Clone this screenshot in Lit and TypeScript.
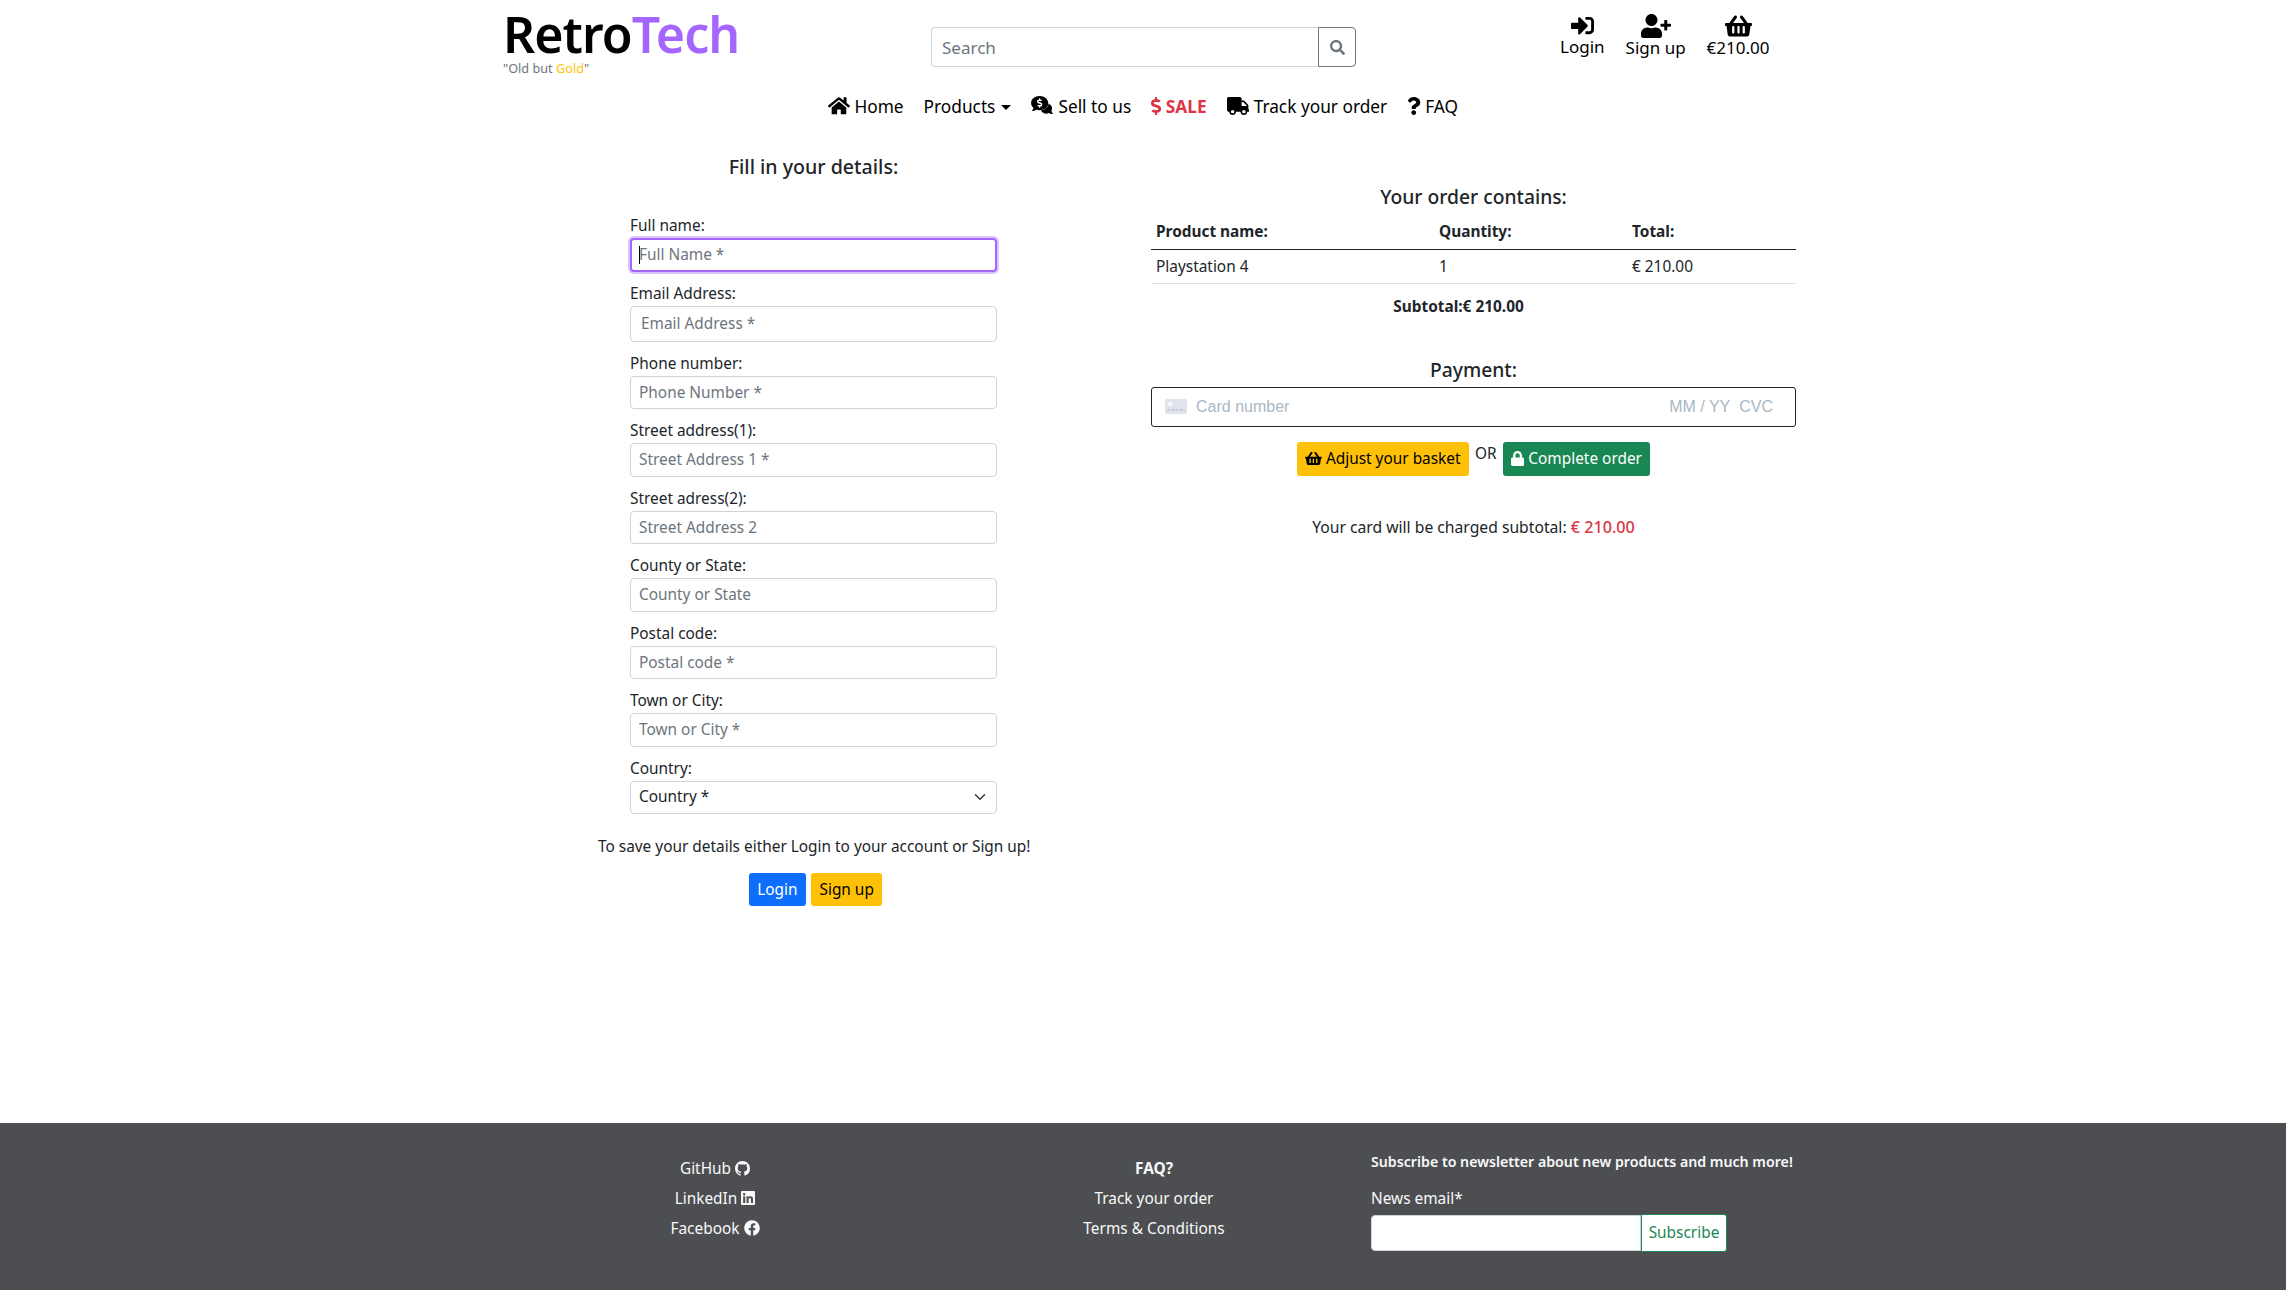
import { LitElement, css, html, svg } from "lit";
import { customElement } from "lit/decorators.js";

// font-awesome style glyphs, [viewBox width, path]
const ICONS: Record<string, [number, string]> = {
  home: [576, "M280.37 148.26L96 300.11V464a16 16 0 0 0 16 16l112.06-.29a16 16 0 0 0 15.92-16V368a16 16 0 0 1 16-16h64a16 16 0 0 1 16 16v95.64a16 16 0 0 0 16 16.05L464 480a16 16 0 0 0 16-16V300L295.67 148.26a12.19 12.19 0 0 0-15.3 0zM571.6 251.47L488 182.56V44.05a12 12 0 0 0-12-12h-56a12 12 0 0 0-12 12v72.61L318.47 43a48 48 0 0 0-61 0L4.34 251.47a12 12 0 0 0-1.6 16.9l25.5 31A12 12 0 0 0 45.15 301l235.22-193.74a12.19 12.19 0 0 1 15.3 0L530.9 301a12 12 0 0 0 16.9-1.6l25.5-31a12 12 0 0 0-1.7-16.93z"],
  login: [512, "M416 448h-84c-6.6 0-12-5.4-12-12v-40c0-6.6 5.4-12 12-12h84c17.7 0 32-14.3 32-32V160c0-17.7-14.3-32-32-32h-84c-6.6 0-12-5.4-12-12V76c0-6.6 5.4-12 12-12h84c53 0 96 43 96 96v192c0 53-43 96-96 96zm-47-201L201 79c-15-15-41-4.5-41 17v96H24c-13.3 0-24 10.7-24 24v96c0 13.3 10.7 24 24 24h136v96c0 21.5 26 32 41 17l168-168c9.3-9.4 9.3-24.6 0-34z"],
  userPlus: [640, "M624 208h-64v-64c0-8.8-7.2-16-16-16h-32c-8.8 0-16 7.2-16 16v64h-64c-8.8 0-16 7.2-16 16v32c0 8.8 7.2 16 16 16h64v64c0 8.8 7.2 16 16 16h32c8.8 0 16-7.2 16-16v-64h64c8.8 0 16-7.2 16-16v-32c0-8.8-7.2-16-16-16zm-400 48c70.7 0 128-57.3 128-128S294.7 0 224 0 96 57.3 96 128s57.3 128 128 128zm89.6 32h-16.7c-22.2 10.2-46.9 16-72.9 16s-50.6-5.8-72.9-16h-16.7C60.2 288 0 348.2 0 422.4V464c0 26.5 21.5 48 48 48h352c26.5 0 48-21.5 48-48v-41.6c0-74.2-60.2-134.4-134.4-134.4z"],
  basket: [576, "M576 216v16c0 13.255-10.745 24-24 24h-8l-26.113 182.788C514.509 462.435 494.257 480 470.37 480H105.63c-23.887 0-44.139-17.565-47.518-41.212L32 256h-8c-13.255 0-24-10.745-24-24v-16c0-13.255 10.745-24 24-24h67.341l106.78-146.821c10.395-14.292 30.407-17.453 44.701-7.058 14.293 10.395 17.453 30.408 7.058 44.701L170.477 192h235.046L326.12 82.821c-10.395-14.292-7.234-34.306 7.059-44.701 14.291-10.395 34.306-7.235 44.701 7.058L484.659 192H552c13.255 0 24 10.745 24 24zM312 392V280c0-13.255-10.745-24-24-24s-24 10.745-24 24v112c0 13.255 10.745 24 24 24s24-10.745 24-24zm112 0V280c0-13.255-10.745-24-24-24s-24 10.745-24 24v112c0 13.255 10.745 24 24 24s24-10.745 24-24zm-224 0V280c0-13.255-10.745-24-24-24s-24 10.745-24 24v112c0 13.255 10.745 24 24 24s24-10.745 24-24z"],
  search: [512, "M505 442.7L405.3 343c-4.5-4.5-10.6-7-17-7H372c27.6-35.3 44-79.7 44-128C416 93.1 322.9 0 208 0S0 93.1 0 208s93.1 208 208 208c48.3 0 92.7-16.4 128-44v16.3c0 6.4 2.5 12.5 7 17l99.7 99.7c9.4 9.4 24.6 9.4 33.9 0l28.3-28.3c9.4-9.4 9.4-24.6.1-34zM208 336c-70.7 0-128-57.2-128-128 0-70.7 57.2-128 128-128 70.7 0 128 57.2 128 128 0 70.7-57.2 128-128 128z"],
  truck: [640, "M624 352h-16V243.9c0-12.7-5.1-24.9-14.1-33.9L494 110.1c-9-9-21.2-14.1-33.9-14.1H416V48c0-26.5-21.5-48-48-48H48C21.5 0 0 21.5 0 48v320c0 26.5 21.5 48 48 48h16c0 53 43 96 96 96s96-43 96-96h128c0 53 43 96 96 96s96-43 96-96h48c8.8 0 16-7.2 16-16v-32c0-8.8-7.2-16-16-16zM160 464c-26.5 0-48-21.5-48-48s21.5-48 48-48 48 21.5 48 48-21.5 48-48 48zm320 0c-26.5 0-48-21.5-48-48s21.5-48 48-48 48 21.5 48 48-21.5 48-48 48zm80-208H416V144h44.1l99.9 99.9V256z"],
  question: [384, "M202.021 0C122.202 0 70.503 32.703 29.914 91.026c-7.363 10.58-5.093 25.086 5.178 32.874l43.138 32.709c10.373 7.865 25.132 6.026 33.253-4.148 25.049-31.381 43.63-49.449 82.757-49.449 30.764 0 68.816 19.799 68.816 49.631 0 22.552-18.617 34.134-48.993 51.164-35.423 19.86-82.299 44.576-82.299 106.405V320c0 13.255 10.745 24 24 24h72.471c13.255 0 24-10.745 24-24v-5.773c0-42.86 125.268-44.645 125.268-160.627C377.504 66.256 286.902 0 202.021 0zM192 373.459c-38.196 0-69.271 31.075-69.271 69.271 0 38.195 31.075 69.27 69.271 69.27s69.271-31.075 69.271-69.271-31.075-69.27-69.271-69.27z"],
  dollar: [288, "M209.2 233.4l-108-31.6C88.7 198.2 80 186.5 80 173.5c0-16.3 13.2-29.5 29.5-29.5h66.3c12.2 0 24.2 3.7 34.2 10.5 6.1 4.1 14.3 3.1 19.5-2l34.8-34c7.1-6.9 6.1-18.4-1.8-24.5C238 74.8 207.4 64.1 176 64V16c0-8.8-7.2-16-16-16h-32c-8.8 0-16 7.2-16 16v48h-2.5C45.8 64-5.4 118.7.5 183.6c4.2 46.1 39.4 83.6 83.8 96.6l102.5 30c12.5 3.7 21.2 15.3 21.2 28.3 0 16.3-13.2 29.5-29.5 29.5h-66.3C100 368 88 364.3 78 357.5c-6.1-4.1-14.3-3.1-19.5 2l-34.8 34c-7.1 6.9-6.1 18.4 1.8 24.5 24.5 19.2 55.1 29.9 86.5 30v48c0 8.8 7.2 16 16 16h32c8.8 0 16-7.2 16-16v-48.2c46.6-.9 90.3-28.6 105.7-72.7 21.5-61.6-14.6-124.8-72.5-141.7z"],
  lock: [448, "M400 224h-24v-72C376 68.2 307.8 0 224 0S72 68.2 72 152v72H48c-26.5 0-48 21.5-48 48v192c0 26.5 21.5 48 48 48h352c26.5 0 48-21.5 48-48V272c0-26.5-21.5-48-48-48zm-104 0H152v-72c0-39.7 32.3-72 72-72s72 32.3 72 72v72z"],
  linkedin: [448, "M416 32H31.9C14.3 32 0 46.5 0 64.3v383.4C0 465.5 14.3 480 31.9 480H416c17.6 0 32-14.5 32-32.3V64.3c0-17.8-14.4-32.3-32-32.3zM135.4 416H69V202.2h66.5V416zm-33.2-243c-21.3 0-38.5-17.3-38.5-38.5S80.9 96 102.2 96c21.2 0 38.5 17.3 38.5 38.5 0 21.3-17.2 38.5-38.5 38.5zm282.1 243h-66.4V312c0-24.8-.5-56.7-34.5-56.7-34.6 0-39.9 27-39.9 54.9V416h-66.4V202.2h63.7v29.2h.9c8.9-16.8 30.6-34.5 62.9-34.5 67.2 0 79.7 44.3 79.7 101.9V416z"],
  facebook: [512, "M504 256C504 119 393 8 256 8S8 119 8 256c0 123.78 90.69 226.38 209.25 245V327.69h-63V256h63v-54.64c0-62.15 37-96.48 93.67-96.48 27.14 0 55.52 4.84 55.52 4.84v61h-31.28c-30.8 0-40.41 19.12-40.41 38.73V256h68.78l-11 71.69h-57.78V501C413.31 482.38 504 379.78 504 256z"],
};

const GITHUB = "M8 0C3.58 0 0 3.58 0 8c0 3.54 2.29 6.53 5.47 7.59.4.07.55-.17.55-.38 0-.19-.01-.82-.01-1.49-2.01.37-2.53-.49-2.69-.94-.09-.23-.48-.94-.82-1.13-.28-.15-.68-.52-.01-.53.63-.01 1.08.58 1.23.82.72 1.21 1.87.87 2.33.66.07-.52.28-.87.51-1.07-1.78-.2-3.64-.89-3.64-3.95 0-.87.31-1.59.82-2.15-.08-.2-.36-1.02.08-2.12 0 0 .67-.21 2.2.82.64-.18 1.32-.27 2-.27.68 0 1.36.09 2 .27 1.53-1.04 2.2-.82 2.2-.82.44 1.1.16 1.92.08 2.12.51.56.82 1.27.82 2.15 0 3.07-1.87 3.75-3.65 3.95.29.25.54.73.54 1.48 0 1.07-.01 1.93-.01 2.2 0 .21.15.46.55.38A8.013 8.013 0 0016 8c0-4.42-3.58-8-8-8z";

const icon = (name: string, size = 16) => {
  const [w, d] = ICONS[name];
  return html`<svg class="ico" viewBox="0 0 ${w} 512" width=${(size * w) / 512} height=${size} fill="currentColor">${svg`<path d=${d}></path>`}</svg>`;
};

// big bubble with a dollar, small bubble tucked behind its lower right
const sellIcon = html`<svg class="ico" viewBox="0 0 24 20" width="23" height="19" fill="currentColor">
  <path d="M14 8.500a5 5 0 0 1 5.500 .200c2.600 1.600 3.300 4.600 1.900 7l1.600 3.300c-1.700 .2-3.200-.2-4.400-1-3 1.300-6.100 .3-7.700-2-.3-.4-.5-.8-.6-1.200z"></path>
  <path d="M9 0c5.100 0 9 3.100 9 7.400s-3.900 7.500-9 7.500c-1.200 0-2.400-.2-3.500-.5-1.300 1-2.900 1.500-4.700 1.500 .9-1 1.500-2.100 1.700-3.200C.9 11.100 0 9.400 0 7.400 0 3.100 3.900 0 9 0z" stroke="#fff" stroke-width=".7" paint-order="stroke"></path>
  <path fill="#fff" transform="translate(6.200 2.400) scale(.0195 .0195)" d=${ICONS.dollar[1]}></path>
</svg>`;

const FIELDS = [
  { label: "Full name:", ph: "Full Name *", cls: "focused" },
  { label: "Email Address:", ph: "Email Address *", cls: "tall" },
  { label: "Phone number:", ph: "Phone Number *", cls: "" },
  { label: "Street address(1):", ph: "Street Address 1 *", cls: "" },
  { label: "Street adress(2):", ph: "Street Address 2", cls: "" },
  { label: "County or State:", ph: "County or State", cls: "" },
  { label: "Postal code:", ph: "Postal code *", cls: "" },
  { label: "Town or City:", ph: "Town or City *", cls: "" },
];

@customElement("app-root")
export class AppRoot extends LitElement {
  override render() {
    return html`
      <header class="top">
        <div class="brand">
          <div class="logo">Retro<span class="purple">Tech</span></div>
          <div class="tagline">"Old but <span class="gold">Gold</span>"</div>
        </div>
        <div class="search">
          <input class="search-input" placeholder="Search" />
          <button class="search-btn">${icon("search", 15)}</button>
        </div>
        <div class="account">
          <a class="acc">${icon("login", 23)}<span>Login</span></a>
          <a class="acc">${icon("userPlus", 24)}<span>Sign up</span></a>
          <a class="acc">${icon("basket", 24)}<span>€210.00</span></a>
        </div>
      </header>

      <nav class="nav">
        <a>${icon("home", 19.5)} Home</a>
        <a>Products <i class="caret"></i></a>
        <a>${sellIcon} Sell to us</a>
        <a class="sale">${icon("dollar", 18)} SALE</a>
        <a>${icon("truck", 18)} Track your order</a>
        <a>${icon("question", 18)} FAQ</a>
      </nav>

      <main class="main">
        <section class="details">
          <h2 class="title">Fill in your details:</h2>
          <form class="form">
            ${FIELDS.map(
              (f) => html`
                <label class="field">
                  <span class="lbl">${f.label}</span>
                  <span class="control-wrap">
                    <input class="control ${f.cls}" placeholder=${f.ph} />
                    ${f.cls === "focused" ? html`<i class="cursor"></i>` : ""}
                  </span>
                </label>
              `,
            )}
            <label class="field">
              <span class="lbl">Country:</span>
              <span class="control select">
                Country *
                <svg viewBox="0 0 16 16" width="12" height="12" fill="none" stroke="#343a40" stroke-width="2" stroke-linecap="round" stroke-linejoin="round"><path d="M2 5l6 6 6-6"></path></svg>
              </span>
            </label>
          </form>
          <p class="save-note">To save your details either Login to your account or Sign up!</p>
          <div class="save-btns">
            <button class="btn blue">Login</button>
            <button class="btn yellow">Sign up</button>
          </div>
        </section>

        <section class="order">
          <h2 class="title order-title">Your order contains:</h2>
          <div class="row head">
            <span>Product name:</span><span>Quantity:</span><span>Total:</span>
          </div>
          <div class="row item">
            <span>Playstation 4</span><span>1</span><span>€ 210.00</span>
          </div>
          <div class="subtotal">Subtotal:€ 210.00</div>
          <h2 class="title pay-title">Payment:</h2>
          <div class="card">
            <svg viewBox="0 0 22 15" width="22" height="15"><rect width="22" height="15" rx="1.500" fill="#dfe3ea"></rect><rect x="2.500" y="3" width="5" height="4" fill="#f7f8fa"></rect><path d="M2.500 11h17" stroke="#b0b8c6" stroke-width="1.200" stroke-dasharray="2.500 1.500"></path></svg>
            <span class="card-num">Card number</span>
            <span class="card-date">MM / YY</span>
            <span class="card-cvc">CVC</span>
          </div>
          <div class="pay-actions">
            <button class="btn yellow">${icon("basket", 15)} Adjust your basket</button>
            <span class="or">OR</span>
            <button class="btn green">${icon("lock", 15)} Complete order</button>
          </div>
          <p class="charge">Your card will be charged subtotal: <span class="red">€ 210.00</span></p>
        </section>
      </main>

      <footer class="footer">
        <div class="links">
          <a>GitHub <svg class="ico" viewBox="0 0 16 16" width="15" height="15" fill="currentColor"><path d=${GITHUB}></path></svg></a>
          <a>LinkedIn ${icon("linkedin")}</a>
          <a>Facebook ${icon("facebook")}</a>
        </div>
        <div class="links">
          <a class="strong">FAQ?</a>
          <a>Track your order</a>
          <a>Terms &amp; Conditions</a>
        </div>
        <div class="news">
          <div class="news-title">Subscribe to newsletter about new products and much more!</div>
          <div class="news-label">News email*</div>
          <div class="news-row">
            <input class="news-input" />
            <button class="news-btn">Subscribe</button>
          </div>
        </div>
      </footer>
    `;
  }

  static override styles = css`
    :host {
      display: flex;
      flex-direction: column;
      height: 1290px;
      background: #fff;
      color: #212529;
      font: 15.4px/24px "Noto Sans", sans-serif;
      overflow: hidden;
    }
    * { box-sizing: border-box; }
    .ico { vertical-align: -2px; }
    a { color: inherit; text-decoration: none; }
    input { font: inherit; }
    input::placeholder { color: #6c757d; opacity: 1; }

    /* header */
    .top { display: flex; padding-left: 503px; height: 84px; flex: none; }
    .brand { width: 428px; padding-top: 6.500px; }
    .logo { font-size: 50px; line-height: 54px; font-weight: 600; color: #000; letter-spacing: -.9px; }
    .purple { color: #a566ff; }
    .tagline { font-size: 12.7px; line-height: 14px; color: #6c757d; }
    .gold { color: #ffc107; }
    .search { display: flex; width: 425px; height: 40px; margin-top: 27px; }
    .search-input {
      flex: 1; min-width: 0; height: 100%;
      border: 1px solid #ced4da; border-right: 0;
      border-radius: 4px 0 0 4px; font-size: 17px;
      padding: 0 10px; outline: none; color: #212529;
    }
    .search-btn {
      width: 38px; border: 1px solid #6c757d; border-radius: 0 4px 4px 0;
      background: #fff; color: #6c757d; padding: 0;
      display: flex; align-items: center; justify-content: center;
    }
    .account { display: flex; gap: 21px; margin-left: 204px; padding-top: 14px; color: #000; font-size: 17px; }
    .acc { display: flex; flex-direction: column; align-items: center; line-height: 23px; }
    .acc .ico { display: block; }
    .acc span { margin-top: -2px; }

    /* nav */
    .nav {
      display: flex; justify-content: center; gap: 20px;
      height: 46px; flex: none; padding-top: 11px; color: #000; font-size: 17.300px;
    }
    .sale { color: #dc3545; font-weight: 700; }
    .caret {
      display: inline-block; margin-left: 1px; vertical-align: 3px;
      border-top: 5px solid currentColor;
      border-left: 5px solid transparent; border-right: 5px solid transparent;
    }

    /* main */
    .main { flex: 1; display: flex; padding-left: 598px; gap: 122px; }
    .details { width: 431px; padding-top: 24.500px; }
    .title { margin: 0; font-size: 19.600px; line-height: 24px; font-weight: 500; text-align: center; }
    .form { width: 367px; margin: 35.500px auto 0; }
    .field { display: block; margin-bottom: 10px; }
    .lbl { display: block; height: 24px; }
    .control-wrap { display: block; position: relative; }
    .control {
      display: flex; align-items: center; justify-content: space-between;
      width: 100%; height: 33.500px;
      border: 1px solid #ced4da; border-radius: 4px;
      padding: 0 8px; outline: none; background: #fff; color: #212529;
    }
    .control.tall { height: 36px; padding: 0 10px; }
    .control.focused { border: 2px solid #a566ff; padding: 0 7px; box-shadow: 0 0 0 2px #dcc5ff; }
    .cursor { position: absolute; left: 9px; top: 8px; width: 1px; height: 18px; background: #000; }
    .select { padding-right: 10px; }
    .save-note { margin: 21px 0 0; text-align: center; white-space: nowrap; }
    .save-btns { display: flex; justify-content: center; gap: 5px; margin-top: 14px; padding-left: 4px; }
    .btn {
      display: inline-block; height: 33px; padding: 0 8.500px;
      border: 0; border-radius: 3px; font: inherit; white-space: nowrap;
    }
    .blue { background: #0d6efd; color: #fff; }
    .yellow { background: #ffc107; color: #000; }
    .green { background: #198754; color: #fff; }

    .order { width: 645px; padding-top: 55px; margin-left: 0; }
    .order .title { font-size: 19.300px; }
    .row { display: grid; grid-template-columns: 283px 193px 1fr; padding: 0 5px; }
    .head { height: 40px; padding-top: 10px; font-weight: 700; border-bottom: 1.500px solid #212529; line-height: 24px; margin-top: .500px; }
    .item { height: 34px; padding-top: 5px; border-bottom: 1px solid #dee2e6; }
    .subtotal { text-align: center; font-weight: 700; margin-top: 11px; padding-right: 30px; }
    .pay-title { margin-top: 39.500px; }
    .card {
      display: flex; align-items: center; height: 39.500px; margin-top: 5px;
      border: 1px solid #212529; border-radius: 3px; padding: 0 22px 0 13px;
      font: 16px "Liberation Sans", sans-serif; color: #aab7c4;
    }
    .card-num { margin-left: 9px; flex: 1; }
    .card-cvc { margin-left: 9px; }
    .pay-actions { display: flex; justify-content: center; gap: 6px; margin-top: 15px; }
    .pay-actions .btn { height: 34px; }
    .or { line-height: 24px; }
    .charge { margin: 39px 0 0; text-align: center; font-size: 15.700px; }
    .red { color: #dc3545; font-size: 16.200px; font-weight: 500; }

    /* footer */
    .footer {
      flex: none; height: 167px; background: #4d4e51; color: #f8f9fa;
      display: grid; grid-template-columns: 450px 428px auto;
      padding: 27px 0 0 490px;
    }
    .links { display: flex; flex-direction: column; align-items: center; padding-top: 4px; }
    .links a { height: 30px; line-height: 30px; }
    .strong { font-weight: 700; }
    .news { margin-left: 3px; }
    .news-title { font-size: 14.200px; line-height: 24px; font-weight: 600; white-space: nowrap; }
    .news-label { margin-top: 13px; }
    .news-row { display: flex; align-items: center; margin-top: 3px; }
    .news-input { width: 270px; height: 36px; border: 1px solid #ced4da; border-radius: 4px 0 0 4px; background: #fff; outline: none; }
    .news-btn {
      width: 86px; height: 38px; padding: 0; font: inherit;
      border: 1px solid #198754; border-radius: 0 3px 3px 0; background: #fff; color: #198754;
    }
  `;
}
